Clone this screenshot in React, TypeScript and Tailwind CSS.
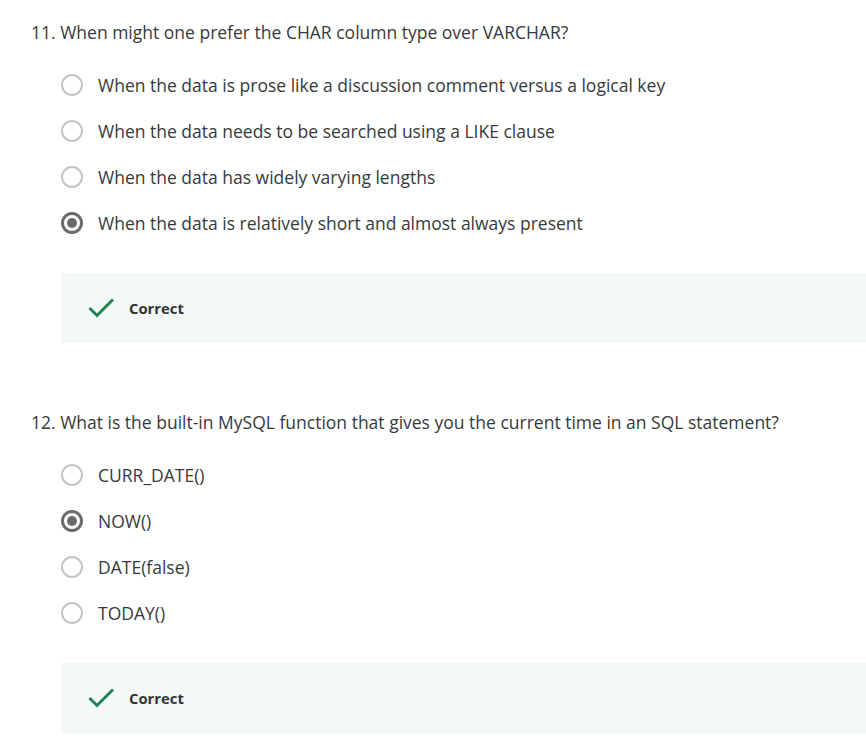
import React from "react";

type Q = { n: number; text: string; options: string[]; selected: number };

const qs: Q[] = [
  {
    n: 11,
    text: "When might one prefer the CHAR column type over VARCHAR?",
    options: [
      "When the data is prose like a discussion comment versus a logical key",
      "When the data needs to be searched using a LIKE clause",
      "When the data has widely varying lengths",
      "When the data is relatively short and almost always present",
    ],
    selected: 3,
  },
  {
    n: 12,
    text: "What is the built-in MySQL function that gives you the current time in an SQL statement?",
    options: ["CURR_DATE()", "NOW()", "DATE(false)", "TODAY()"],
    selected: 1,
  },
];

function Radio({ on }: { on: boolean }) {
  if (on) {
    return (
      <span className="flex h-[22px] w-[22px] shrink-0 items-center justify-center rounded-full border-[3px] border-[#6a6a6a] bg-white">
        <span className="h-[10px] w-[10px] rounded-full bg-[#6a6a6a]" />
      </span>
    );
  }
  return <span className="block h-[22px] w-[22px] shrink-0 rounded-full border-2 border-[#c4c4c4] bg-white" />;
}

function Check() {
  return (
    <svg width="28" height="22" viewBox="0 0 28 22" className="shrink-0">
      <polyline points="1.5,11 9,18.5 25,2.5" fill="none" stroke="#1f8354" strokeWidth="3" />
    </svg>
  );
}

export default function App() {
  return (
    <div
      className="min-h-[742px] w-[866px] overflow-hidden bg-white pt-[20px] text-[#373a3c]"
      style={{ fontFamily: '"Open Sans", sans-serif' }}
    >
      {qs.map((q, qi) => (
        <div key={q.n} className={qi > 0 ? "mt-[67px]" : ""}>
          <div className="pl-[31px] text-[17.5px] leading-[24px]">
            {q.n}. {q.text}
          </div>
          <div className="mt-[18px] pl-[61px]">
            {q.options.map((o, i) => (
              <div key={i} className="flex h-[46px] items-center gap-[15px]">
                <Radio on={i === q.selected} />
                <span className="text-[17.5px] leading-[24px]">{o}</span>
              </div>
            ))}
          </div>
          <div className="ml-[61px] mt-[27px] flex h-[70px] w-[820px] items-center bg-[#f4f8f6] pl-[27px]">
            <Check />
            <span className="ml-[13px] text-[14.8px] font-bold leading-[20px] text-[#333]">Correct</span>
          </div>
        </div>
      ))}
    </div>
  );
}
